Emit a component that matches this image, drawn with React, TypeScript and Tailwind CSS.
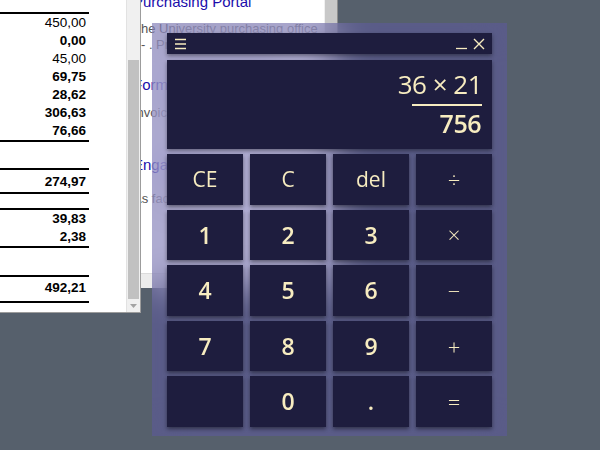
type ReportItem =
  | { kind: "rule" }
  | { kind: "gap"; h: string }
  | { kind: "num"; v: string; bold?: boolean };

const report: ReportItem[] = [
  { kind: "rule" },
  { kind: "num", v: "450,00" },
  { kind: "num", v: "0,00", bold: true },
  { kind: "num", v: "45,00" },
  { kind: "num", v: "69,75", bold: true },
  { kind: "num", v: "28,62", bold: true },
  { kind: "num", v: "306,63", bold: true },
  { kind: "num", v: "76,66", bold: true },
  { kind: "rule" },
  { kind: "gap", h: "h-[26px]" },
  { kind: "rule" },
  { kind: "gap", h: "h-[3px]" },
  { kind: "num", v: "274,97", bold: true },
  { kind: "gap", h: "h-[1px]" },
  { kind: "rule" },
  { kind: "gap", h: "h-[14px]" },
  { kind: "rule" },
  { kind: "num", v: "39,83", bold: true },
  { kind: "num", v: "2,38", bold: true },
  { kind: "rule" },
  { kind: "gap", h: "h-[27px]" },
  { kind: "rule" },
  { kind: "gap", h: "h-[2px]" },
  { kind: "num", v: "492,21", bold: true },
  { kind: "gap", h: "h-[4px]" },
  { kind: "rule" },
];

type Key = { label: string; kind: "fn" | "num" | "op" };

const keys: Key[] = [
  { label: "CE", kind: "fn" },
  { label: "C", kind: "fn" },
  { label: "del", kind: "fn" },
  { label: "÷", kind: "op" },
  { label: "1", kind: "num" },
  { label: "2", kind: "num" },
  { label: "3", kind: "num" },
  { label: "×", kind: "op" },
  { label: "4", kind: "num" },
  { label: "5", kind: "num" },
  { label: "6", kind: "num" },
  { label: "−", kind: "op" },
  { label: "7", kind: "num" },
  { label: "8", kind: "num" },
  { label: "9", kind: "num" },
  { label: "+", kind: "op" },
  { label: "", kind: "num" },
  { label: "0", kind: "num" },
  { label: ".", kind: "num" },
  { label: "=", kind: "op" },
];

const keyText = {
  fn: "text-[21px] font-normal",
  num: "text-[23px] font-semibold",
  op: "text-[22px] font-light",
};

const ReportWindow = () => (
  <div className="absolute left-0 top-0 w-[141px] h-[313px] bg-white border-r border-b border-[#9c9c9c] flex font-['Liberation_Sans',Arial,sans-serif]">
    <div className="flex-1">
      <div className="w-[89px] pt-[12px] flex flex-col">
        {report.map((item, i) => {
          if (item.kind === "rule") return <div key={i} className="h-[2px] bg-black" />;
          if (item.kind === "gap") return <div key={i} className={item.h} />;
          return (
            <div
              key={i}
              className={`h-[18px] leading-[18px] text-right pr-[3px] text-[13.5px] text-black ${item.bold ? "font-bold" : ""}`}
            >
              {item.v}
            </div>
          );
        })}
      </div>
    </div>
    {/* Scrollbar */}
    <div className="w-[14px] flex flex-col bg-[#f0f0f0] border-l border-[#e2e2e2]">
      <div className="h-[60px]" />
      <div className="flex-1 bg-[#c1c1c1] mx-[1px]" />
      <div className="h-[13px] flex items-center justify-center">
        <svg width="7" height="4" viewBox="0 0 7 4">
          <path d="M0 0h7L3.5 4z" fill="#a3a3a3" />
        </svg>
      </div>
    </div>
  </div>
);

const BrowserWindow = () => (
  <div className="absolute left-[100px] top-0 w-[238px] h-[288px] bg-white flex flex-col border-r border-[#8e8e8e] font-['Liberation_Sans',Arial,sans-serif]">
    <div className="flex-1 flex overflow-hidden">
      <div className="flex-1 pl-[33px] flex flex-col whitespace-nowrap overflow-hidden">
        <div className="mt-[-7px] text-[15px] leading-[18px] text-[#1a0dab]">Purchasing Portal</div>
        <div className="mt-[10px] text-[13px] leading-[16px] text-[#545454]">The University purchasing office</div>
        <div className="text-[13px] leading-[16px] text-[#545454]">r - . Procurement services</div>
        <div className="mt-[23px] text-[15px] leading-[18px] text-[#1a0dab]">Forms and Templates</div>
        <div className="mt-[11px] text-[13px] leading-[16px] text-[#545454]">Invoice processing and vendor</div>
        <div className="mt-[35px] text-[15px] leading-[18px] text-[#1a0dab]">Engaging</div>
        <div className="mt-[17px] text-[13px] leading-[16px] text-[#545454]">As faculty</div>
      </div>
      <div className="w-[13px] bg-[#f0f0f0] flex flex-col">
        <div className="h-[150px] bg-[#c8c8c8] ml-[1px]" />
      </div>
    </div>
    <div className="h-[15px] bg-[#ececec] border-t border-[#dcdcdc]" />
  </div>
);

const Calculator = () => (
  <div className="absolute left-[152px] top-[23px] w-[355px] h-[413px] bg-[#5d58a4]/50 backdrop-blur-[18px] pt-[10px] px-[15px] pb-[9px] flex flex-col font-['Open_Sans',sans-serif] text-[#f7ecc0]">
    {/* Title bar */}
    <div className="h-[21px] bg-[#1e1d3e] flex items-center pl-[8px] pr-[7px] shadow-[0_2px_4px_rgba(0,0,0,0.4)]">
      <svg width="11" height="12" viewBox="0 0 11 12" fill="none" stroke="#f7ecc0" strokeWidth="1.5">
        <path d="M0 1.5h11M0 6h11M0 10.5h11" />
      </svg>
      <div className="flex-1" />
      <svg width="11" height="12" viewBox="0 0 11 12" fill="none" stroke="#f7ecc0" strokeWidth="1.3" className="mr-[6px]">
        <path d="M0 10.5h11" />
      </svg>
      <svg width="12" height="12" viewBox="0 0 12 12" fill="none" stroke="#f7ecc0" strokeWidth="1.4">
        <path d="M1 1l10 10M11 1L1 11" />
      </svg>
    </div>

    {/* Display */}
    <div className="mt-[6px] h-[89px] bg-[#1e1d3e] flex flex-col items-end pt-[9px] pr-[10px] shadow-[0_2px_4px_rgba(0,0,0,0.4)]">
      <div className="text-[26px] leading-[30px] font-normal tracking-[-0.5px]">36 × 21</div>
      <div className="mt-[5px] w-[70px] h-[2px] bg-[#f7ecc0]" />
      <div className="mt-[2px] text-[25px] leading-[30px] font-semibold tracking-[-0.5px] mr-[1px]">756</div>
    </div>

    {/* Keypad */}
    <div className="mt-[5px] h-[273px] grid grid-cols-4 grid-rows-5 gap-x-[7px] gap-y-[5px]">
      {keys.map((k, i) => (
        <div
          key={i}
          className={`bg-[#1e1d3e] flex items-center justify-center shadow-[0_2px_4px_rgba(0,0,0,0.45)] ${keyText[k.kind]}`}
        >
          {k.label}
        </div>
      ))}
    </div>
  </div>
);

export default function App() {
  return (
    <div className="relative w-[600px] h-[450px] overflow-hidden bg-[#56606c]">
      <BrowserWindow />
      <ReportWindow />
      <Calculator />
    </div>
  );
}
